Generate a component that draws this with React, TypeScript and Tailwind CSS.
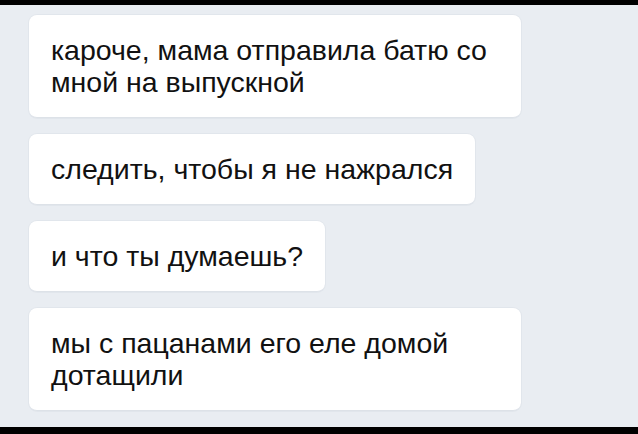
const messages = [
  'кароче, мама отправила батю со мной на выпускной',
  'следить, чтобы я не нажрался',
  'и что ты думаешь?',
  'мы с пацанами его еле домой дотащили',
];

export default function App() {
  return (
    <div className="flex h-[434px] w-[638px] flex-col overflow-hidden bg-[#e9edf2]">
      <div className="h-[5px] bg-black" />
      <div className="flex flex-col items-start gap-[16px] pl-[29px] pt-[10px]">
        {messages.map((m) => (
          <div
            key={m}
            className="max-w-[492px] rounded-[8px] border-b border-[#dde2e8] bg-white px-[22px] py-[19px] text-[28.5px] leading-[32px] text-[#111] shadow-[0_0_0_1px_rgba(220,225,232,0.6)]"
            style={{ fontFamily: '"Liberation Sans", Arial, sans-serif' }}
          >
            {m}
          </div>
        ))}
      </div>
      <div className="flex-1" />
      <div className="h-[7px] bg-black" />
    </div>
  );
}
